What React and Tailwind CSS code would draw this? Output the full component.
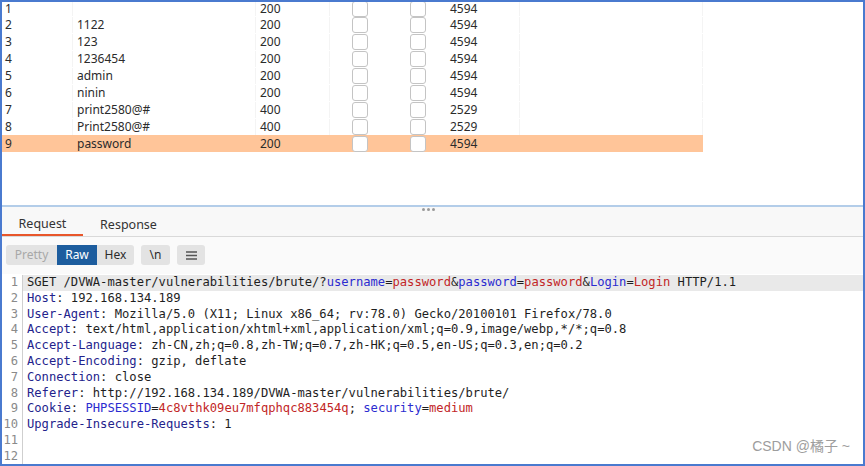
const rows = [
    { n: '1', payload: '', status: '200', length: '4594' },
    { n: '2', payload: '1122', status: '200', length: '4594' },
    { n: '3', payload: '123', status: '200', length: '4594' },
    { n: '4', payload: '1236454', status: '200', length: '4594' },
    { n: '5', payload: 'admin', status: '200', length: '4594' },
    { n: '6', payload: 'ninin', status: '200', length: '4594' },
    { n: '7', payload: 'print2580@#', status: '400', length: '2529' },
    { n: '8', payload: 'Print2580@#', status: '400', length: '2529' },
    { n: '9', payload: 'password', status: '200', length: '4594', active: true },
];

// token kinds: h = header name, p = param name, v = value, t = plain
const lines = [
    [['t', 'SGET /DVWA-master/vulnerabilities/brute/?'], ['p', 'username'], ['t', '='], ['v', 'password'], ['t', '&'], ['p', 'password'], ['t', '='], ['v', 'password'], ['t', '&'], ['p', 'Login'], ['t', '='], ['v', 'Login'], ['t', ' HTTP/1.1']],
    [['h', 'Host'], ['t', ': 192.168.134.189']],
    [['h', 'User-Agent'], ['t', ': Mozilla/5.0 (X11; Linux x86_64; rv:78.0) Gecko/20100101 Firefox/78.0']],
    [['h', 'Accept'], ['t', ': text/html,application/xhtml+xml,application/xml;q=0.9,image/webp,*/*;q=0.8']],
    [['h', 'Accept-Language'], ['t', ': zh-CN,zh;q=0.8,zh-TW;q=0.7,zh-HK;q=0.5,en-US;q=0.3,en;q=0.2']],
    [['h', 'Accept-Encoding'], ['t', ': gzip, deflate']],
    [['h', 'Connection'], ['t', ': close']],
    [['h', 'Referer'], ['t', ': http://192.168.134.189/DVWA-master/vulnerabilities/brute/']],
    [['h', 'Cookie'], ['t', ': '], ['p', 'PHPSESSID'], ['t', '='], ['v', '4c8vthk09eu7mfqphqc883454q'], ['t', '; '], ['p', 'security'], ['t', '='], ['v', 'medium']],
    [['h', 'Upgrade-Insecure-Requests'], ['t', ': 1']],
    [],
    [],
];

const tokenClass = {
    h: 'text-[#23238c]',
    p: 'text-[#2b2bd0]',
    v: 'text-[#c22626]',
    t: 'text-[#1e1e1e]',
};

const Check = () => (
    <div className="w-[16px] h-[16px] rounded-[3px] border border-[#c4c4c4] bg-white" />
);

export default function App() {
    return (
        <div
            className="relative w-[865px] h-[466px] border-2 border-[#4a7acf] bg-white flex flex-col overflow-hidden"
            style={{ fontFamily: '"Noto Sans", "Open Sans", sans-serif' }}
        >
            {/* results table */}
            <div className="h-[203px] overflow-hidden shrink-0">
                <div className="text-[12px] leading-[14px] text-[#2b2b2b]">
                    {rows.map((r, i) => {
                        const line = r.active ? '' : 'border-r border-[#f4f4f4]';
                        return (
                            <div
                                key={r.n}
                                className={`flex items-center w-[701px] ${i === 0 ? 'h-[14px]' : 'h-[17px] pt-[1px]'} ${r.active ? 'bg-[#ffc599]' : ''}`}
                            >
                                <div className={`w-[71px] h-full pl-[3px] flex items-center ${line}`}>{r.n}</div>
                                <div className={`w-[183px] h-full pl-[4px] flex items-center ${line}`}>{r.payload}</div>
                                <div className={`w-[74px] h-full pl-[4px] flex items-center ${line}`}>{r.status}</div>
                                <div className="w-[60px] h-full flex items-center justify-center"><Check /></div>
                                <div className="w-[56px] h-full flex items-center justify-center"><Check /></div>
                                <div className={`w-[74px] h-full pl-[4px] flex items-center ${line}`}>{r.length}</div>
                                <div className={`w-[183px] h-full ${line}`} />
                            </div>
                        );
                    })}
                </div>
            </div>

            {/* splitter */}
            <div className="h-[2px] bg-[#b3cde9] shrink-0" />

            {/* tabs */}
            <div className="relative h-[30px] bg-[#f8f8f8] flex items-stretch border-b border-[#d9d9d9] shrink-0 text-[12.5px] text-[#333]">
                <div className="absolute left-[420px] top-[1px] flex gap-[2px]">
                    <span className="w-[3px] h-[3px] rounded-full bg-[#9a9a9a]" />
                    <span className="w-[3px] h-[3px] rounded-full bg-[#9a9a9a]" />
                    <span className="w-[3px] h-[3px] rounded-full bg-[#9a9a9a]" />
                </div>
                <div className="w-[81px] flex items-center justify-center pt-[8px] border-b-2 border-[#e8562a]">Request</div>
                <div className="w-[91px] flex items-center justify-center pt-[8px]">Response</div>
            </div>

            {/* toolbar */}
            <div className="h-[37px] bg-[#fafafa] flex items-start pt-[8px] pl-[4px] gap-[7px] shrink-0 text-[12px]">
                <div className="flex h-[20px]">
                    <div className="w-[51px] flex items-center justify-center bg-[#e3e3e3] text-[#a8a8a8] rounded-l-[3px]">Pretty</div>
                    <div className="w-[40px] flex items-center justify-center bg-[#1d5d9e] text-white">Raw</div>
                    <div className="w-[37px] flex items-center justify-center bg-[#e3e3e3] text-[#2b2b2b] rounded-r-[3px]">Hex</div>
                </div>
                <div className="w-[29px] h-[20px] flex items-center justify-center bg-[#e3e3e3] text-[#2b2b2b] rounded-[3px]">{'\\n'}</div>
                <div className="w-[28px] h-[20px] flex items-center justify-center bg-[#e3e3e3] rounded-[3px]">
                    <svg width="11" height="9" viewBox="0 0 11 9">
                        <path d="M0 1h11M0 4.5h11M0 8h11" stroke="#555" strokeWidth="1.4" />
                    </svg>
                </div>
            </div>

            {/* editor */}
            <div
                className="flex-1 flex bg-white text-[12.15px] leading-[15.8px] pt-[1px]"
                style={{ fontFamily: '"DejaVu Sans Mono", "Liberation Mono", monospace' }}
            >
                <div className="w-[21px] border-r border-[#cfcfcf] text-right pr-[4px] text-[#8a8a8a] shrink-0">
                    {lines.map((_, i) => (
                        <div key={i} className="h-[15.8px]">{i + 1}</div>
                    ))}
                </div>
                <div className="flex-1">
                    {lines.map((toks, i) => (
                        <div
                            key={i}
                            className={`h-[15.8px] pl-[4px] whitespace-pre ${i === 0 ? 'bg-[#e9e9e9]' : ''}`}
                        >
                            {toks.map(([k, s], j) => (
                                <span key={j} className={tokenClass[k]}>{s}</span>
                            ))}
                        </div>
                    ))}
                </div>
            </div>

            <div
                className="absolute right-[13px] bottom-[7px] text-[14px] text-[#9d9d9d]"
                style={{ fontFamily: '"Liberation Sans", "Noto Sans CJK SC", sans-serif' }}
            >
                CSDN @橘子 ~
            </div>
        </div>
    );
}
